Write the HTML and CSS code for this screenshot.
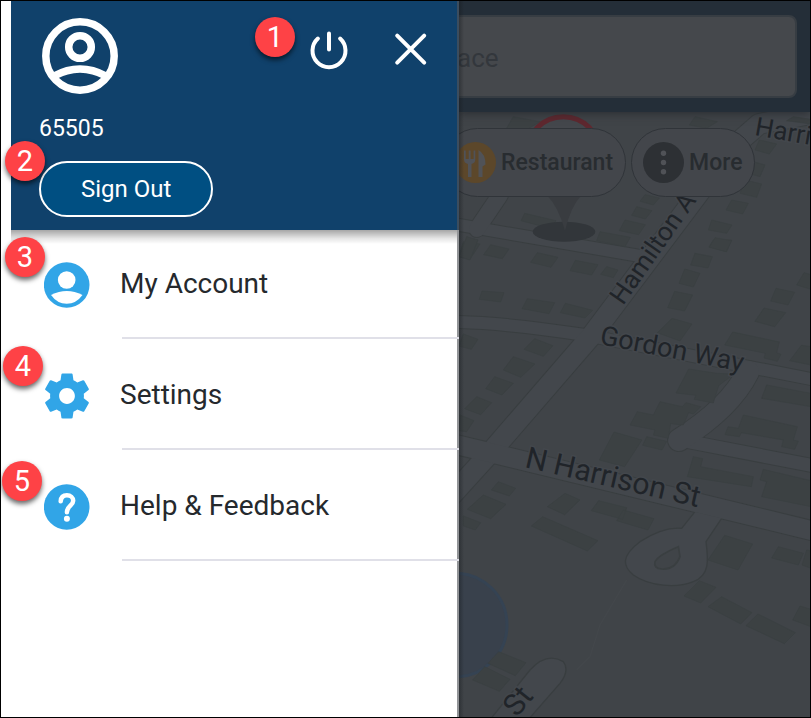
FILE: index.html
```html
<!DOCTYPE html>
<html lang="en">
<head>
<meta charset="utf-8">
<meta name="viewport" content="width=device-width, initial-scale=1">
<title>Menu</title>
<link rel="stylesheet" href="styles.css">
</head>
<body>
<div class="app">
  <aside class="drawer">
    <header class="profile">
      <div class="profile-top">
        <svg class="avatar" viewBox="0 0 76 76" aria-hidden="true">
          <circle cx="38" cy="38" r="34.2"/>
          <circle cx="38" cy="29" r="11.3"/>
          <path d="M12 58Q38 44 64 58"/>
        </svg>
        <div class="actions">
          <button class="icon-button" type="button" aria-label="Power">
            <svg viewBox="0 0 40 40"><path d="M20 3.500V19.500M8.900 8.500A16.500 16.500 0 1 0 31.100 8.500"/></svg>
          </button>
          <button class="icon-button" type="button" aria-label="Close">
            <svg viewBox="0 0 40 40"><path d="M6.200 5.700L33.200 32.700M33.200 5.700L6.200 32.700"/></svg>
          </button>
          <span class="badge badge-power">1</span>
        </div>
      </div>
      <div class="account-id">65505</div>
      <div class="signout-row">
        <button class="signout" type="button">Sign Out</button>
        <span class="badge badge-signout">2</span>
      </div>
    </header>
    <nav>
      <ul class="menu">
        <li class="item">
          <svg class="item-icon" viewBox="0 0 46 46" aria-hidden="true">
            <circle cx="22.700" cy="23" r="22.800"/>
            <circle class="cut" cx="22.700" cy="18" r="8.800"/>
            <path class="cut" d="M7 33Q22.700 25 38.500 33Q32.300 41.700 22.700 41.700T7 33Z"/>
          </svg>
          <a class="item-label" href="#account">My Account</a>
          <span class="badge badge-account">3</span>
        </li>
        <li class="item">
          <svg class="item-icon" viewBox="1.800 1.800 20.400 20.400" aria-hidden="true">
            <path fill-rule="evenodd" d="M19.430 12.980c.04-.32.07-.64.07-.98s-.03-.66-.07-.98l2.110-1.650c.19-.15.24-.42.12-.64l-2-3.460c-.12-.22-.39-.3-.61-.22l-2.490 1c-.52-.4-1.080-.73-1.690-.98l-.38-2.650C14.460 2.180 14.250 2 14 2h-4c-.25 0-.46.18-.49.42l-.38 2.650c-.61.25-1.170.59-1.690.98l-2.490-1c-.23-.09-.49 0-.61.22l-2 3.460c-.13.22-.07.49.12.64l2.110 1.650c-.04.32-.07.65-.07.98s.03.66.07.98l-2.110 1.650c-.19.15-.24.42-.12.64l2 3.460c.12.22.39.3.61.22l2.490-1c.52.4 1.080.73 1.690.98l.38 2.650c.03.24.24.42.49.42h4c.25 0 .46-.18.49-.42l.38-2.650c.61-.25 1.170-.59 1.690-.98l2.490 1c.23.09.49 0 .61-.22l2-3.460c.12-.22.07-.49-.12-.64l-2.110-1.650zM12 15.500c-1.930 0-3.500-1.570-3.500-3.500s1.570-3.500 3.500-3.500 3.500 1.570 3.500 3.500-1.570 3.500-3.500 3.500z"/>
          </svg>
          <a class="item-label" href="#settings">Settings</a>
          <span class="badge badge-settings">4</span>
        </li>
        <li class="item">
          <svg class="item-icon" viewBox="0 0 46 46" aria-hidden="true">
            <circle cx="22.700" cy="23" r="22.800"/>
            <path class="mark" d="M16.700 17.300C17 13.300 19.500 11.300 22.900 11.300C26.600 11.300 29.200 13.600 29.200 16.800C29.200 21.600 22.900 22 22.900 28.300"/>
            <circle class="cut" cx="22.900" cy="34.700" r="3"/>
          </svg>
          <a class="item-label" href="#help">Help &amp; Feedback</a>
          <span class="badge badge-help">5</span>
        </li>
      </ul>
    </nav>
  </aside>

  <main class="backdrop">
    <svg class="map" viewBox="459 1 351 716" preserveAspectRatio="xMinYMin slice">
      <g class="water"><circle cx="455" cy="625" r="52"/></g>
      <g class="road-edge">
        <path class="w14" d="M459 322Q505 323 585 335L811 379M459 225L640 256"/>
        <path class="w22" d="M440 508L490 453L592 335L735 145L759 124L830 110"/>
        <path class="w18" d="M477 229L500 195"/>
        <path class="w21" d="M449 443L500 455L830 535"/>
        <path class="w15" d="M680 440L830 469"/>
        <path class="w24" d="M748 372Q730 408 679 440"/>
      </g>
      <g transform="translate(450 470) scale(.33333)">
        <path class="lane" d="M735 125L695 175Q640 170 570 215C510 260 520 290 550 315C600 350 680 355 730 335C780 315 775 270 768 215L815 145"/>
        <path class="lane" d="M125 743L240 600Q290 545 340 575Q360 600 330 640L240 743"/>
        <path class="trail" d="M530 330L450 465L420 560L380 600"/>
      </g>
      <g class="road-fill">
        <path class="w12" d="M459 322Q505 323 585 335L811 379M459 225L640 256"/>
        <path class="w20" d="M440 508L490 453L592 335L735 145L759 124L830 110"/>
        <path class="w16" d="M477 229L500 195"/>
        <path class="w19" d="M449 443L500 455L830 535"/>
        <path class="w13" d="M680 440L830 469"/>
        <path class="w22" d="M748 372Q730 408 679 440"/>
      </g>
      <g class="buildings" transform="translate(450 470) scale(.33333)">
        <path class="island" d="M685 230L690 260Q675 300 635 297Q610 295 615 275Q625 255 685 230Z"/>
        <path d="M145 35L197 55L178 78L124 60ZM100 75L168 103L122 146L52 118ZM40 138L92 158L76 180L40 168ZM345 70L390 90L344 134L292 110ZM446 92L530 113L518 148L424 122ZM520 120L612 146L594 180L500 152ZM278 140L444 212L412 243L244 168ZM824 196L908 222L864 300L774 270ZM985 230L1060 250L1045 285L965 264ZM1070 240L1083 243V295L1056 285ZM748 332L798 352L752 399L702 378ZM815 380L906 428L872 462L774 410ZM924 432L1036 488L1003 521L888 467ZM1050 408L1083 418V470L1028 450ZM146 545L228 578L196 617L114 580ZM104 590L180 628L148 664L68 630Z"/>
      </g>
      <g class="buildings" transform="translate(450 240) scale(.33333)">
        <path d="M40 5L90 12L60 58L27 50ZM122 14L177 27L157 56L101 44ZM262 38L324 52L303 82L242 67ZM376 61L444 74L425 105L360 92ZM470 80L504 90L490 113L452 103ZM96 153L162 158L152 186L88 178ZM232 176L314 188L297 221L216 206ZM346 190L428 211L405 234L331 218ZM40 282L84 298L64 328L27 318ZM254 296L309 317L280 349L222 328ZM190 350L255 372L212 412L160 390ZM134 410L190 430L156 465L107 446ZM80 470L125 488L92 524L44 506ZM30 525L72 542L50 575L27 572ZM735 40L787 50L774 84L722 75ZM790 0H845L830 35L777 20ZM704 87L750 100L730 141L687 130ZM674 154L728 165L704 213L653 203ZM666 235L726 252L690 303L622 278ZM848 276L988 306L980 338L993 343L982 364L942 354L946 340L824 315ZM978 145L1034 157L1014 195L962 183ZM942 204L1007 218L974 260L915 244ZM1062 98L1083 104V148L1040 135ZM1054 316L1083 320V375L1019 362ZM716 387L800 400L852 402L806 437L790 489L733 478L737 466L678 459ZM630 485L697 500L708 488L752 500L730 522L716 518L700 555L662 551L655 595L610 585L615 570L540 555L562 515L610 525ZM492 576L576 600L524 680L448 660ZM590 590L650 604L636 630L578 616ZM950 435L1083 460V500L935 475ZM880 525L1042 560L1030 600L1045 604L1034 628L995 620L1000 600L874 578L868 590L825 584L834 560L865 565ZM730 650L758 656L752 680L910 710L904 740L712 710ZM940 688L990 700L1083 722V800L935 770L950 725L930 720Z"/>
      </g>
      <g class="buildings" transform="translate(450 0) scale(.33333)">
        <path d="M190 350L270 365L220 395L170 385ZM735 350L802 365L770 385L718 375ZM1030 350L1083 358V372L1010 362ZM928 420L980 432L958 462L915 450ZM910 485L945 495L930 530L895 520ZM885 540L935 552L920 592L870 580ZM845 600L895 610L878 642L828 630ZM785 660L846 675L830 700L775 690ZM795 713L845 722L828 755L778 742ZM585 584L628 594L610 615L570 604ZM560 620L606 632L586 657L545 646ZM525 660L586 674L566 704L508 692ZM450 695L541 712L525 740L440 722ZM224 640L318 662L304 686L213 662ZM50 710L84 720L60 780L27 770Z"/>
      </g>
      <g transform="translate(450 0) scale(.33333)">
        <circle class="pin-ring" cx="340" cy="460" r="110"/>
        <ellipse class="pin-shadow" cx="342" cy="695" rx="94" ry="30"/>
        <path class="pin-tail" d="M290 585Q325 620 345 692Q362 620 395 585Z"/>
      </g>
      <g class="streets">
        <text transform="translate(754 135) rotate(10)">Harris</text>
        <text transform="translate(623 306) rotate(-55)">Hamilton A</text>
        <text class="mid" transform="translate(599 344) rotate(11)">Gordon Way</text>
        <text class="major" transform="translate(524 467) rotate(13)">N Harrison St</text>
        <text class="major" transform="translate(517 718) rotate(-51)">St</text>
      </g>
    </svg>
    <div class="searchbar">
      <input class="search" type="text" placeholder="ace" aria-label="Place">
    </div>
    <div class="chips">
      <button class="chip" type="button">
        <svg class="chip-icon" viewBox="0 0 41 41" aria-hidden="true">
          <circle class="food" cx="20.500" cy="20.500" r="20.500"/>
          <path class="cutlery" d="M9 8.500V17.500Q9 21 13 22V35H16.500V22Q20.300 21 20.300 17.500V8.500H18.600V17H15.600V8.500H13.700V17H10.700V8.500ZM23.500 8Q30.500 12 30.500 22.500L27.500 24.500V35H23.500Z"/>
        </svg>
        Restaurant
      </button>
      <button class="chip" type="button">
        <svg class="chip-icon" viewBox="0 0 41 41" aria-hidden="true">
          <circle class="more" cx="20.500" cy="20.500" r="20.500"/>
          <g class="dots"><circle cx="20.500" cy="11.200" r="2.700"/><circle cx="20.500" cy="20.500" r="2.700"/><circle cx="20.500" cy="29.800" r="2.700"/></g>
        </svg>
        More
      </button>
    </div>
  </main>
</div>
</body>
</html>
```
FILE: styles.css
```css
* {
  box-sizing: border-box;
}

body {
  margin: 0;
  font-family: Roboto, "Liberation Sans", sans-serif;
  color: #25292d;
}

button,
input {
  font: inherit;
}

.app {
  display: grid;
  grid-template-columns: 448fr 351fr;
  min-height: 100vh;
  padding-left: 10px;
  overflow: hidden;
  border: 1px solid #000;
  background: #fff;
}

.drawer {
  position: relative;
  z-index: 1;
  border-right: 2px solid #929497;
  background: #fff;
}

.profile {
  position: relative;
  margin-right: -2px;
  padding: 17px 26px 13px 28px;
  border-right: 2px solid #3b4d5f;
  background: #10416b;
}

.profile::after {
  content: "";
  position: absolute;
  top: 100%;
  right: 0;
  left: 0;
  height: 14px;
  background: linear-gradient(rgba(0, 0, 0, 0.35), rgba(0, 0, 0, 0.1) 60%, transparent);
}

.profile-top {
  display: flex;
  justify-content: space-between;
  padding-left: 3px;
}

.avatar {
  width: 76px;
  height: 76px;
  fill: none;
  stroke: #fff;
  stroke-width: 7.5px;
}

.actions {
  position: relative;
  display: flex;
  gap: 42px;
  height: 40px;
  margin-top: 12px;
}

.icon-button {
  width: 40px;
  height: 40px;
  padding: 0;
  border: 0;
  background: none;
}

.icon-button svg {
  display: block;
  fill: none;
  stroke: #fff;
  stroke-width: 4px;
  stroke-linecap: round;
}

.account-id {
  margin-top: 19px;
  font-size: 23px;
  line-height: 32px;
  color: #fff;
}

.signout-row {
  position: relative;
  display: flex;
  margin-top: 16px;
}

.signout {
  padding: 10px 40px;
  border: 2px solid #fff;
  border-radius: 28px;
  background: #004f82;
  font-size: 24px;
  line-height: 32px;
  color: #fff;
}

.badge {
  position: absolute;
  z-index: 1;
  width: 40px;
  height: 40px;
  border-radius: 50%;
  background: #fe4246;
  box-shadow: 0 3px 5px rgba(0, 0, 0, 0.6);
  font-size: 29px;
  line-height: 41px;
  text-align: center;
  color: #fff;
}

.badge-power {
  top: -13px;
  left: -54px;
}

.badge-signout {
  top: -20px;
  left: -34px;
}

.badge-account {
  top: 7px;
  left: -6px;
}

.badge-settings {
  top: 7px;
  left: -8px;
}

.badge-help {
  top: 11px;
  left: -9px;
}

.menu {
  margin: 0;
  padding: 0;
  list-style: none;
}

.item {
  position: relative;
  display: flex;
  gap: 32px;
  margin-right: -2px;
  padding: 34px 0 0 33px;
}

.item:first-child {
  padding-top: 32px;
}

.item-icon {
  flex: none;
  width: 46px;
  height: 46px;
  fill: #31a5e7;
}

.cut {
  fill: #fff;
}

.mark {
  fill: none;
  stroke: #fff;
  stroke-width: 4.5px;
  stroke-linecap: round;
}

.item-label {
  flex: 1;
  padding-bottom: 31px;
  border-bottom: 2px solid #e0e0e8;
  font-size: 28px;
  line-height: 44px;
  text-indent: -2px;
  color: inherit;
  text-decoration: none;
}

.backdrop {
  position: relative;
  overflow: hidden;
  background: #404448;
}

.backdrop::after {
  content: "";
  position: absolute;
  inset: 0 auto 0 0;
  width: 5px;
  background: linear-gradient(to right, rgba(20, 24, 28, 0.4), transparent);
}

.map {
  position: absolute;
  inset: 0;
  width: 100%;
  height: 100%;
}

.searchbar {
  position: relative;
  padding: 14px 13px 14px 0;
  background: #242e38;
  box-shadow: 0 2px 8px rgba(30, 34, 38, 0.6);
}

.search {
  display: block;
  width: calc(100% + 20px);
  margin-left: -20px;
  padding: 26px 16px 22px;
  border: 2px solid #373d43;
  border-radius: 8px;
  background: #45484c;
  font-size: 26px;
  line-height: 31px;
  color: #33373c;
}

.search::placeholder {
  color: #33373c;
  opacity: 1;
}

.chips {
  position: relative;
  display: flex;
  gap: 5px;
  margin: 16px 0 0 -16px;
}

.chip {
  display: flex;
  flex: none;
  align-items: center;
  gap: 5px;
  height: 69px;
  padding: 0 12px 0 11px;
  border: 1px solid #303439;
  border-radius: 35px;
  background: #43464b;
  font-size: 23px;
  font-weight: 500;
  line-height: 32px;
  color: #282c30;
}

.chip-icon {
  width: 41px;
  height: 41px;
}

.food {
  fill: #5c472a;
}

.cutlery,
.dots {
  fill: #505257;
}

.more {
  fill: #2d3034;
}

.water {
  fill: #39414c;
  stroke: #354353;
  stroke-width: 3px;
}

.road-edge,
.road-fill {
  fill: none;
  stroke-linejoin: round;
  stroke-linecap: round;
}

.road-edge {
  stroke: #393e40;
}

.road-fill {
  stroke: #43474c;
}

.w12 { stroke-width: 12px; }
.w13 { stroke-width: 13px; }
.w14 { stroke-width: 14px; }
.w15 { stroke-width: 15px; }
.w16 { stroke-width: 16px; }
.w18 { stroke-width: 18px; }
.w19 { stroke-width: 19px; }
.w20 { stroke-width: 20px; }
.w21 { stroke-width: 21px; }
.w22 { stroke-width: 22px; }
.w24 { stroke-width: 24px; }

.lane {
  fill: #43474c;
  stroke: #393e40;
  stroke-width: 4px;
}

.trail {
  fill: none;
  stroke: #43474b;
  stroke-width: 4px;
}

.buildings {
  fill: #3c4143;
  stroke: #3a3f41;
  stroke-width: 2px;
}

.island {
  fill: #404448;
  stroke-width: 5px;
}

.pin-ring {
  fill: #44474c;
  stroke: #5e282f;
  stroke-width: 15px;
}

.pin-shadow {
  fill: #32363a;
}

.pin-tail {
  fill: #393c40;
}

.streets {
  font-size: 26px;
  fill: #202429;
  stroke: #43474c;
  stroke-width: 3px;
  paint-order: stroke;
}

.mid {
  font-size: 27px;
}

.major {
  font-size: 30px;
}
```
